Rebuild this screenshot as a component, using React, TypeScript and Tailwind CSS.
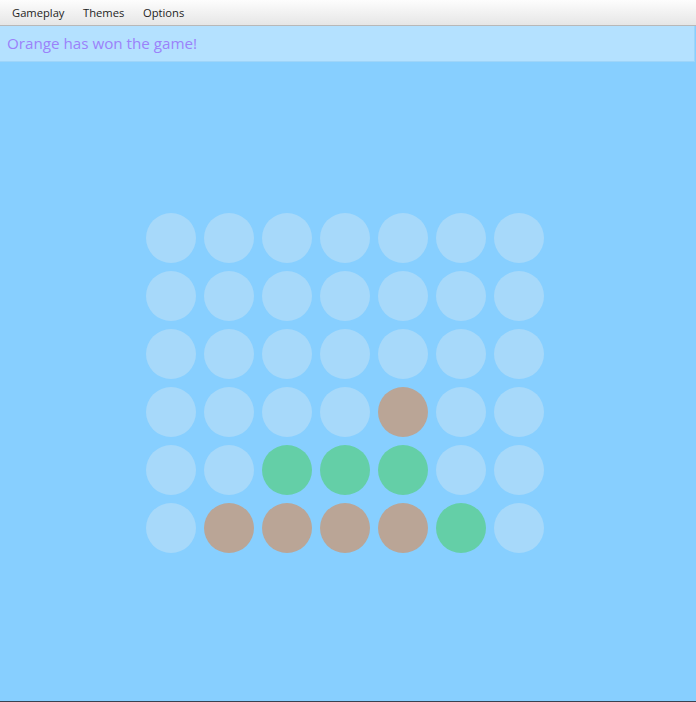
import React from "react";

const board: number[][] = [
  [0, 0, 0, 0, 0, 0, 0],
  [0, 0, 0, 0, 0, 0, 0],
  [0, 0, 0, 0, 0, 0, 0],
  [0, 0, 0, 0, 1, 0, 0],
  [0, 0, 2, 2, 2, 0, 0],
  [0, 1, 1, 1, 1, 2, 0],
];

export default function App() {
  return (
    <div
      className="w-[696px] h-[702px] flex flex-col bg-[#87cfff] overflow-hidden"
      style={{ fontFamily: '"Segoe UI", "Open Sans", "Noto Sans", sans-serif' }}
    >
      <div className="h-[26px] flex items-center bg-gradient-to-b from-[#fdfdfd] to-[#e6e6e6] border-b border-[#b8b8b8] text-[11.2px] text-[#1e1e1e] pl-[12px] pt-[2px]">
        <span className="w-[71px]">Gameplay</span>
        <span className="w-[60px]">Themes</span>
        <span>Options</span>
      </div>
      <div className="h-[36px] mr-[1px] bg-[#b4e1ff] border-b border-r border-[#9fd5f9] flex items-center pl-[7px] text-[15.2px] text-[#9b82fa]">
        Orange has won the game!
      </div>
      <div className="flex-1 flex justify-start pl-[146px] pt-[151px]">
        <div className="grid grid-cols-7 gap-[8px] h-fit">
          {board.flat().map((v, i) => (
            <div
              key={i}
              className={
                "w-[50px] h-[50px] rounded-full " +
                (v === 1 ? "bg-[#baa596]" : v === 2 ? "bg-[#64cfa7]" : "bg-[#a7d9fa]")
              }
            />
          ))}
        </div>
      </div>
      <div className="h-[1px] bg-[#3a4250]" />
    </div>
  );
}
